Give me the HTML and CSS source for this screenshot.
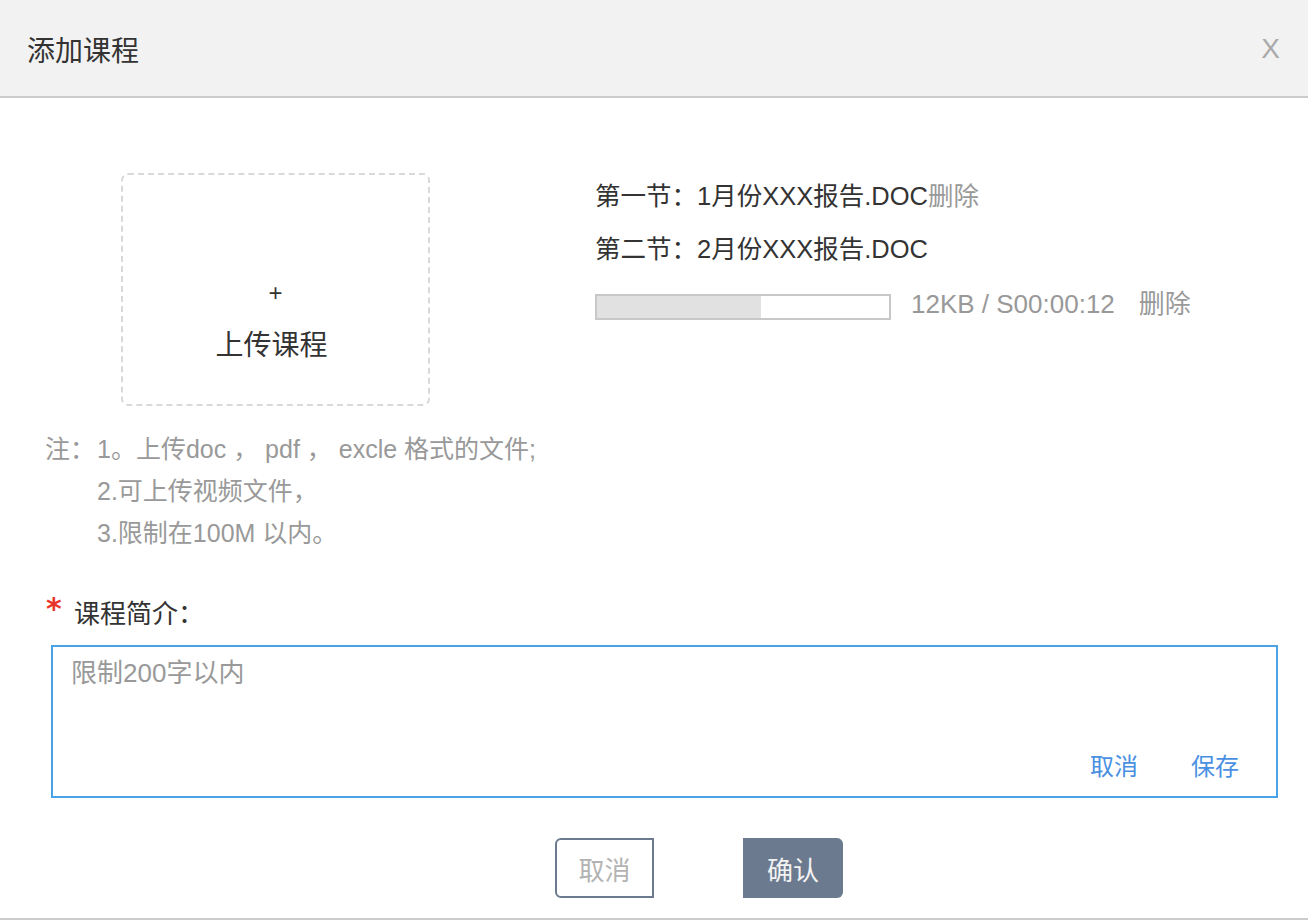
FILE: index.html
```html
<!DOCTYPE html>
<html lang="zh-CN">
<head>
<meta charset="utf-8">
<title>添加课程</title>
<link rel="stylesheet" href="styles.css">
</head>
<body>
<div class="dialog">
  <div class="header">
    <div class="title">添加课程</div>
    <div class="close">X</div>
  </div>
  <div class="top">
    <div class="upload-col">
      <div class="upload-box">
        <div class="plus">+</div>
        <div class="upload-label">上传课程</div>
      </div>
      <div class="notes">
        <div class="note-label">注：</div>
        <div class="note-lines">
          <div class="note-line">1。上传doc ， pdf ， excle 格式的文件;</div>
          <div class="note-line">2.可上传视频文件，</div>
          <div class="note-line">3.限制在100M 以内。</div>
        </div>
      </div>
    </div>
    <div class="files">
      <div class="file-line">第一节：1月份XXX报告.DOC<span class="del">删除</span></div>
      <div class="file-line">第二节：2月份XXX报告.DOC</div>
      <div class="progress-row">
        <div class="bar"><div class="fill" style="width:164px"></div></div>
        <span class="progress-text">12KB / S00:00:12</span>
        <span class="del del-gap">删除</span>
      </div>
    </div>
  </div>
  <div class="intro">
    <div class="intro-label"><span class="star">*</span><span class="intro-text">课程简介：</span></div>
    <div class="intro-box">
      <textarea class="intro-input" placeholder="限制200字以内"></textarea>
      <div class="intro-actions">
        <span class="link">取消</span>
        <span class="link">保存</span>
      </div>
    </div>
  </div>
  <div class="footer">
    <button class="btn btn-cancel">取消</button>
    <button class="btn btn-ok">确认</button>
  </div>
</div>
</body>
</html>
```
FILE: styles.css
```css
html, body {
  margin: 0;
  padding: 0;
  background: #ffffff;
}
body {
  font-family: "Liberation Sans", "Noto Sans CJK SC", sans-serif;
  color: #333333;
}
.dialog {
  width: 1308px;
  height: 920px;
  box-sizing: border-box;
  display: flex;
  flex-direction: column;
  overflow: hidden;
}
.header {
  height: 96px;
  background: #f2f2f2;
  border-bottom: 2px solid #cccccc;
  display: flex;
  align-items: center;
  justify-content: space-between;
  padding: 0 28px 0 27px;
  flex-shrink: 0;
}
.title {
  font-size: 28px;
  line-height: 40px;
  color: #333333;
  padding-top: 8px;
}
.close {
  font-size: 28px;
  line-height: 40px;
  color: #aaaaaa;
  padding-top: 2px;
}
.top {
  display: flex;
  padding-top: 75px;
  flex-shrink: 0;
}
.upload-col {
  width: 595px;
  box-sizing: border-box;
  padding-left: 45px;
  flex-shrink: 0;
}
.upload-box {
  margin-left: 76px;
  width: 309px;
  height: 233px;
  box-sizing: border-box;
  border: 2px dashed #d9d9d9;
  border-radius: 7px;
  display: flex;
  flex-direction: column;
  align-items: center;
  padding-top: 103px;
}
.plus {
  font-size: 24px;
  line-height: 30px;
  color: #333333;
}
.upload-label {
  margin-top: 18px;
  margin-right: 8px;
  font-size: 28px;
  line-height: 40px;
  color: #333333;
}
.notes {
  display: flex;
  margin-top: 22px;
  color: #999999;
  font-size: 25px;
}
.note-label {
  width: 52px;
  flex-shrink: 0;
  line-height: 42px;
}
.note-line {
  line-height: 42px;
  white-space: nowrap;
}
.files {
  padding-top: 8px;
  font-size: 25.5px;
}
.file-line {
  line-height: 30px;
  margin-bottom: 23px;
  color: #333333;
  white-space: nowrap;
}
.del {
  color: #999999;
}
.progress-row {
  margin-top: 30px;
  display: flex;
  align-items: center;
  height: 26px;
  white-space: nowrap;
  font-size: 26px;
}
.bar {
  width: 296px;
  height: 26px;
  box-sizing: border-box;
  border: 2px solid #c8c8c8;
  background: #ffffff;
}
.fill {
  height: 100%;
  background: #e1e1e1;
}
.progress-text {
  margin-left: 20px;
  color: #999999;
  line-height: 30px;
  margin-top: -6px;
}
.del-gap {
  margin-left: 24px;
  line-height: 30px;
  margin-top: -6px;
}
.intro {
  margin-top: 42px;
  padding: 0 30px 0 51px;
  flex-shrink: 0;
}
.intro-label {
  display: flex;
  align-items: flex-start;
  height: 36px;
}
.star {
  font-family: "DejaVu Sans", sans-serif;
  font-weight: bold;
  font-size: 30px;
  line-height: 28px;
  color: #e8352b;
  margin-left: -5px;
  margin-top: -1px;
  width: 28px;
  height: 28px;
}
.intro-text {
  font-size: 26px;
  line-height: 36px;
  color: #333333;
}
.intro-box {
  margin-top: 13px;
  height: 153px;
  box-sizing: border-box;
  border: 2px solid #4aa3e6;
  display: flex;
  flex-direction: column;
  padding: 11px 37px 14px 18px;
}
.intro-input {
  flex: 1;
  border: none;
  outline: none;
  resize: none;
  padding: 0;
  margin: 0;
  font-family: "Liberation Sans", "Noto Sans CJK SC", sans-serif;
  font-size: 26px;
  line-height: 30px;
  color: #333333;
  background: transparent;
}
.intro-input::placeholder {
  color: #999999;
}
.intro-actions {
  display: flex;
  justify-content: flex-end;
  gap: 53px;
}
.link {
  font-size: 24px;
  line-height: 30px;
  color: #4a90e2;
}
.footer {
  margin-top: 40px;
  padding-left: 555px;
  display: flex;
  gap: 89px;
  padding-bottom: 20px;
  border-bottom: 2px solid #cccccc;
  flex-shrink: 0;
}
.btn {
  height: 60px;
  box-sizing: border-box;
  font-family: "Liberation Sans", "Noto Sans CJK SC", sans-serif;
  font-size: 26px;
  padding: 0;
  margin: 0;
  cursor: pointer;
}
.btn-cancel {
  width: 99px;
  background: #ffffff;
  border: 2px solid #6b7a8f;
  border-radius: 6px 0 0 6px;
  color: #b3b3b3;
}
.btn-ok {
  width: 100px;
  background: #6b7a8f;
  border: none;
  border-radius: 0 6px 6px 0;
  color: #f2f2f2;
}
```
